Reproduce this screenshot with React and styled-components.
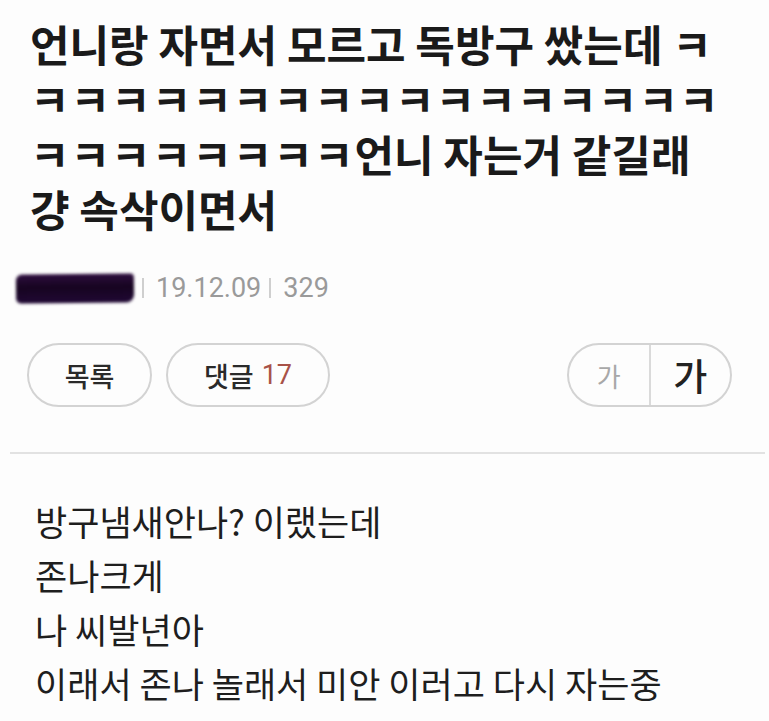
import React from "react";
import styled, { createGlobalStyle } from "styled-components";

const GlobalStyle = createGlobalStyle`
  html, body {
    margin: 0;
    padding: 0;
    background: #fdfdfd;
  }
  body {
    font-family: "Noto Sans CJK KR", "Noto Sans", sans-serif;
    color: #1c1c1c;
  }
`;

const App = () => {
  return (
    <Page>
      <GlobalStyle />
      <Title>
        언니랑 자면서 모르고 독방구 쌌는데 <Laugh>ㅋㅋㅋㅋㅋㅋㅋㅋㅋㅋㅋㅋㅋㅋㅋㅋㅋㅋㅋㅋㅋㅋㅋㅋㅋㅋ</Laugh>언니 자는거 같길래 걍 속삭이면서
      </Title>

      <MetaRow>
        <Scribble />
        <Pipe />
        <MetaText>19.12.09</MetaText>
        <Pipe />
        <MetaText>329</MetaText>
      </MetaRow>

      <ButtonRow>
        <LeftButtons>
          <Pill $width={125}>목록</Pill>
          <Pill $width={164}>
            댓글 <Count>17</Count>
          </Pill>
        </LeftButtons>
        <FontToggle>
          <ToggleHalf $big={false}>가</ToggleHalf>
          <ToggleHalf $big>가</ToggleHalf>
        </FontToggle>
      </ButtonRow>

      <Divider />

      <Body>
        <p>방구냄새안나? 이랬는데</p>
        <p>존나크게</p>
        <p>나 씨발년아</p>
        <p>이래서 존나 놀래서 미안 이러고 다시 자는중</p>
      </Body>
    </Page>
  );
};

const Page = styled.div`
  width: 769px;
  min-height: 721px;
  padding-top: 16px;
  box-sizing: border-box;
  background: #fdfdfd;
  overflow: hidden;
`;

const Title = styled.h1`
  margin: 0;
  padding: 0 30px;
  width: 690px;
  font-size: 43px;
  line-height: 55px;
  font-weight: 700;
  color: #1a1a1a;
`;

const Laugh = styled.span`
  letter-spacing: 1px;
`;

const MetaRow = styled.div`
  display: flex;
  align-items: center;
  height: 32px;
  margin-top: 36px;
  padding-left: 16px;
`;

const Scribble = styled.span`
  display: block;
  width: 118px;
  height: 29px;
  border-radius: 6px 4px 8px 5px;
  background: linear-gradient(180deg, #2d0d3e 0%, #160420 45%, #200834 100%);
  filter: blur(1.4px);
  transform: rotate(-0.6deg);
`;

const Pipe = styled.span`
  display: block;
  width: 2px;
  height: 20px;
  margin: 0 12px 0 8px;
  background: #cfcfcf;
`;

const MetaText = styled.span`
  font-family: Roboto, "Noto Sans", sans-serif;
  font-size: 27px;
  color: #9a9a9a;
  line-height: 30px;
`;

const ButtonRow = styled.div`
  display: flex;
  justify-content: space-between;
  align-items: center;
  margin-top: 39px;
  padding: 0 37px 0 27px;
`;

const LeftButtons = styled.div`
  display: flex;
  gap: 14px;
`;

const Pill = styled.div`
  display: flex;
  align-items: center;
  justify-content: center;
  gap: 8px;
  width: ${(p) => p.$width}px;
  height: 64px;
  box-sizing: border-box;
  border: 2px solid #d3d3d3;
  border-radius: 32px;
  font-size: 27px;
  font-weight: 500;
  color: #2a2a2a;
`;

const Count = styled.span`
  font-family: Roboto, "Noto Sans", sans-serif;
  font-weight: 400;
  color: #a85248;
`;

const FontToggle = styled.div`
  display: flex;
  width: 165px;
  height: 64px;
  box-sizing: border-box;
  border: 2px solid #d3d3d3;
  border-radius: 32px;
  overflow: hidden;
`;

const ToggleHalf = styled.div`
  flex: 1;
  display: flex;
  align-items: center;
  justify-content: center;
  font-size: ${(p) => (p.$big ? "37px" : "26px")};
  font-weight: ${(p) => (p.$big ? 500 : 400)};
  color: ${(p) => (p.$big ? "#222" : "#a8a8a8")};
  & + & {
    border-left: 2px solid #dadada;
  }
`;

const Divider = styled.hr`
  margin: 45px 4px 0 10px;
  border: none;
  height: 2px;
  background: #e2e2e2;
`;

const Body = styled.div`
  margin-top: 40px;
  padding: 0 35px;
  font-size: 35px;
  line-height: 54px;
  color: #1e1e1e;

  p {
    margin: 0;
  }
`;

export default App;
